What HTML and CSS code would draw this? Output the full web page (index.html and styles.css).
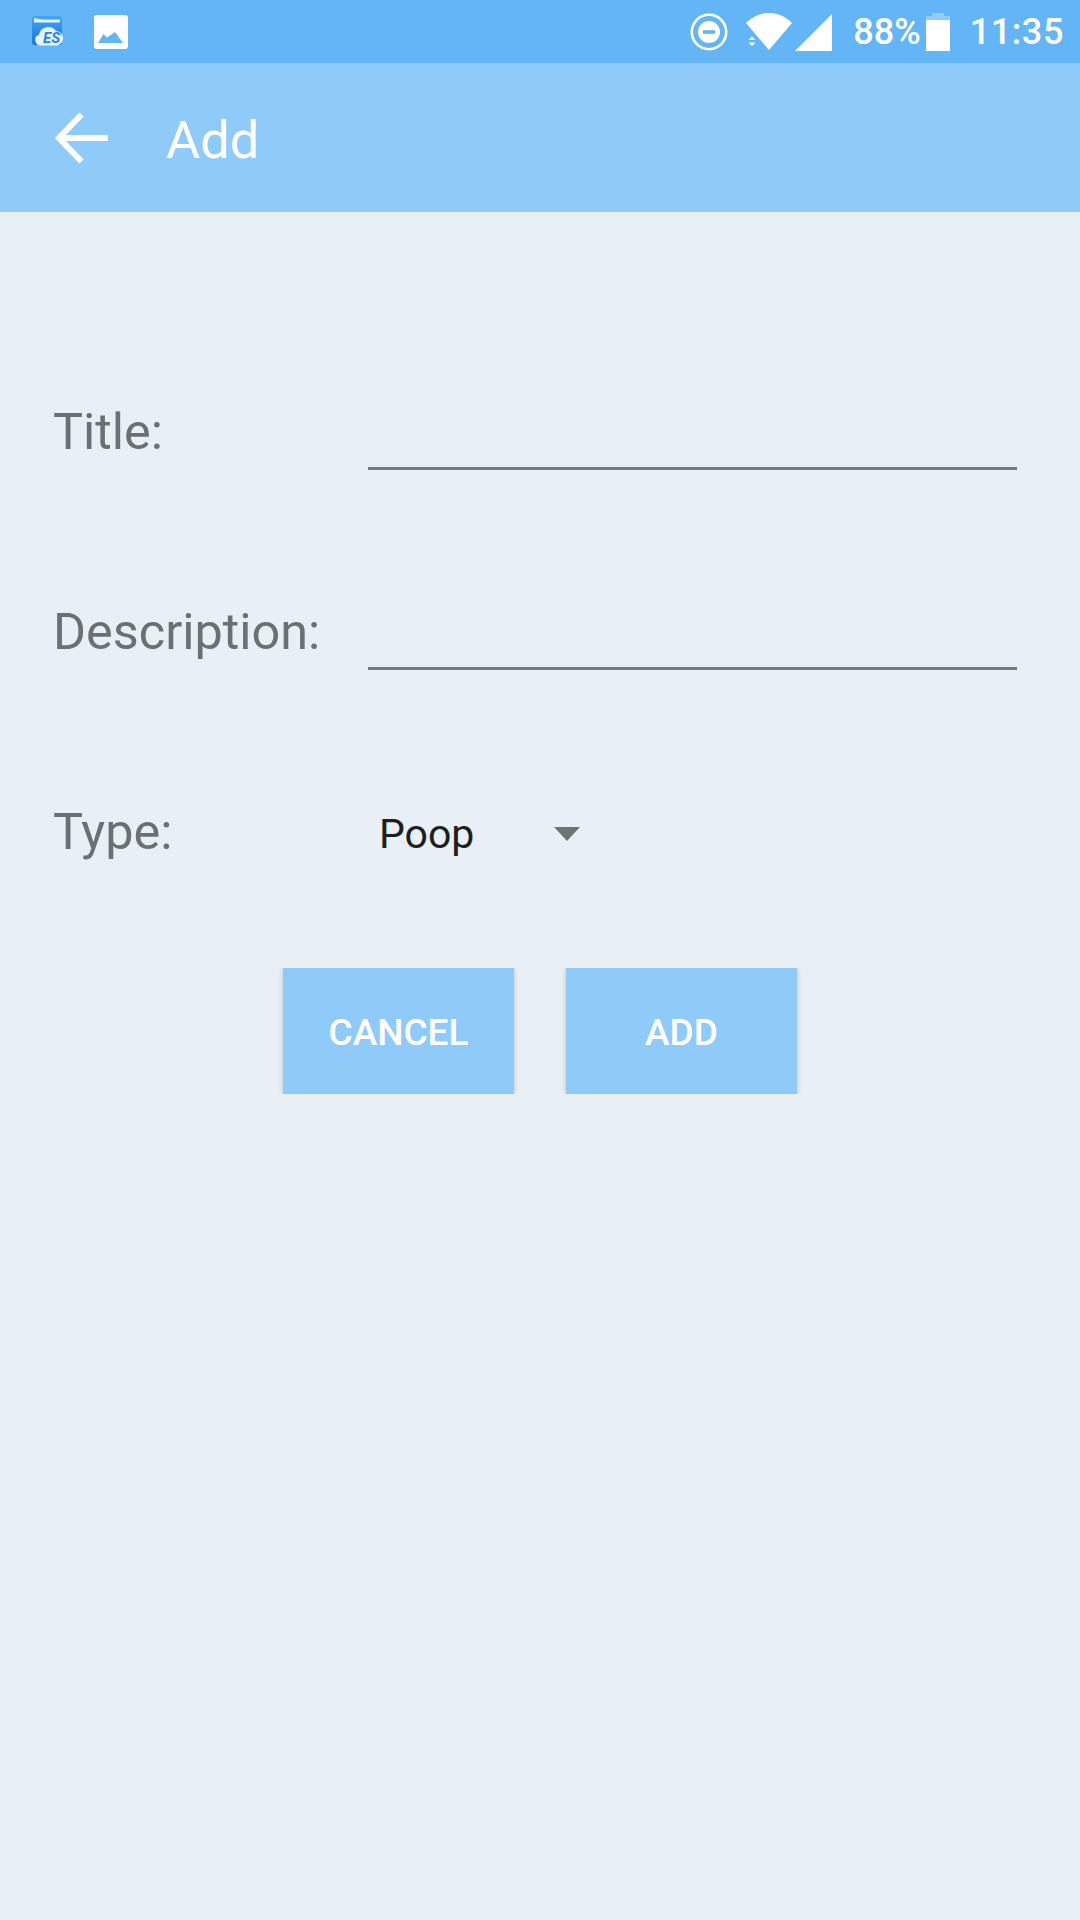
FILE: index.html
```html
<!DOCTYPE html>
<html lang="en">
<head>
<meta charset="utf-8">
<title>Add</title>
<link rel="stylesheet" href="styles.css">
</head>
<body>
<div class="status">
  <div class="status-left">
    <svg class="ic-es" width="33" height="30" viewBox="0 0 33 30">
      <defs><linearGradient id="esg" x1="0" y1="0" x2="0" y2="1"><stop offset="0" stop-color="#42A5F5"/><stop offset="1" stop-color="#1976D2"/></linearGradient></defs>
      <rect x="1" width="30" height="29" rx="3" fill="url(#esg)"/>
      <path d="M3 2l8 1.500h18v3H3z" fill="#E3F2FD"/>
      <path d="M10 29.500a5.500 5.500 0 0 1-2-10.700A9.500 9.500 0 0 1 25 15a7.300 7.300 0 0 1 1 14.500z" fill="#E8F1F8"/>
      <text class="es-text" x="12" y="27">ES</text>
    </svg>
    <svg class="ic-pic" width="34" height="34" viewBox="0 0 34 34">
      <rect width="34" height="34" rx="3" fill="#fff"/>
      <path d="M4 28l5.500-9 3.500 3.500L21 17l8 11z" fill="#64B5F6"/>
    </svg>
  </div>
  <div class="status-right">
    <svg class="ic-dnd" width="38" height="38" viewBox="0 0 38 38">
      <circle cx="19" cy="19" r="17.200" fill="none" stroke="#fff" stroke-width="2.600"/>
      <circle cx="19" cy="19" r="11" fill="#fff"/>
      <rect x="13" y="17.200" width="12" height="3.600" fill="#64B5F6"/>
    </svg>
    <svg class="ic-wifi" width="46" height="38" viewBox="0 0 46 38">
      <path d="M0 10C6 4 14 0 23 0s17 4 23 10L23 37z" fill="#fff"/>
      <path d="M6 25l-3.500 4h7zM6 36l-3.500-4h7z" fill="#fff" transform="translate(0 2) scale(1 0.86)"/>
    </svg>
    <svg class="ic-signal" width="37" height="37" viewBox="0 0 37 37">
      <path d="M37 0v37H0z" fill="#fff"/>
    </svg>
    <span class="pct">88%</span>
    <svg class="ic-batt" width="24" height="38" viewBox="0 0 24 38">
      <path d="M6 0h12v3h6v5H0V3h6z" fill="#90CAF9"/>
      <rect y="7" width="24" height="31" fill="#fff"/>
    </svg>
    <span class="time">11:35</span>
  </div>
</div>
<header class="appbar">
  <svg class="ic-back" width="54" height="52" viewBox="0 0 54 52">
    <path d="M53 26H6M26.500 2.500L4 26l22.500 23.500" fill="none" stroke="#fff" stroke-width="6"/>
  </svg>
  <h1 class="title">Add</h1>
</header>
<main class="form">
  <div class="row">
    <label class="label">Title:</label>
    <div class="input"></div>
  </div>
  <div class="row">
    <label class="label">Description:</label>
    <div class="input"></div>
  </div>
  <div class="row row-select">
    <label class="label">Type:</label>
    <div class="select">
      <span class="select-value">Poop</span>
      <span class="caret"></span>
    </div>
  </div>
  <div class="actions">
    <button class="btn">CANCEL</button>
    <button class="btn">ADD</button>
  </div>
</main>
</body>
</html>
```
FILE: styles.css
```css
* { box-sizing: border-box; }
html, body { margin: 0; padding: 0; }
body {
  width: 1080px;
  height: 1920px;
  background: #e8f0f6;
  font-family: Roboto, sans-serif;
  overflow: hidden;
}
.status {
  height: 63px;
  background: #64b5f6;
  display: flex;
  align-items: center;
  justify-content: space-between;
  padding: 0 16px 0 31px;
  color: #fff;
}
.status-left { display: flex; align-items: center; gap: 30px; }
.ic-es { margin-top: -1px; }
.es-text { font: italic 700 15px Roboto, sans-serif; fill: #1e88e5; }
.status-right { display: flex; align-items: center; }
.ic-dnd { margin-left: 1px; margin-right: 18px; }
.ic-wifi { margin-right: 3px; margin-top: 1px; }
.ic-signal { margin-right: 21px; margin-top: 1px; }
.ic-batt { margin-left: 5px; margin-right: 20px; }
.pct, .time { font-size: 36px; font-weight: 500; line-height: 42px; }
.time { letter-spacing: 0.6px; }
.appbar {
  height: 149px;
  background: #90caf9;
  display: flex;
  align-items: center;
  padding-left: 55px;
}
.ic-back { margin-right: 57px; }
.title {
  margin: 4px 0 0;
  font-size: 52.500px;
  font-weight: 400;
  color: #fff;
  line-height: 56px;
}
.form { padding-top: 175px; }
.row {
  height: 84px;
  margin-bottom: 116px;
  padding: 0 63px 0 54px;
  display: flex;
  align-items: flex-start;
}
.label {
  width: 314px;
  flex: none;
  margin-left: -1px;
  margin-right: 1px;
  padding-top: 16px;
  font-size: 50.400px;
  line-height: 58px;
  color: #6b7073;
}
.input {
  flex: 1;
  height: 83px;
  border-bottom: 3px solid #757b7b;
}
.row-select { margin-bottom: 0; }
.select {
  display: flex;
  align-items: flex-start;
  padding-top: 17px;
  padding-left: 11px;
}
.select-value {
  width: 175px;
  font-size: 41px;
  line-height: 60px;
  color: #1b1f22;
}
.caret {
  margin-top: 23px;
  width: 0;
  height: 0;
  border-left: 13px solid transparent;
  border-right: 13px solid transparent;
  border-top: 14px solid #6f7476;
}
.actions {
  display: flex;
  justify-content: center;
  gap: 52px;
  margin-top: 97px;
}
.btn {
  width: 231px;
  height: 126px;
  border: 0;
  padding: 2px 0 0;
  background: #90caf9;
  color: #fff;
  font-family: Roboto, sans-serif;
  font-size: 37px;
  font-weight: 500;
  box-shadow: 0 0 5px rgba(0, 0, 0, 0.2);
  clip-path: inset(0 -6px);
}
```
